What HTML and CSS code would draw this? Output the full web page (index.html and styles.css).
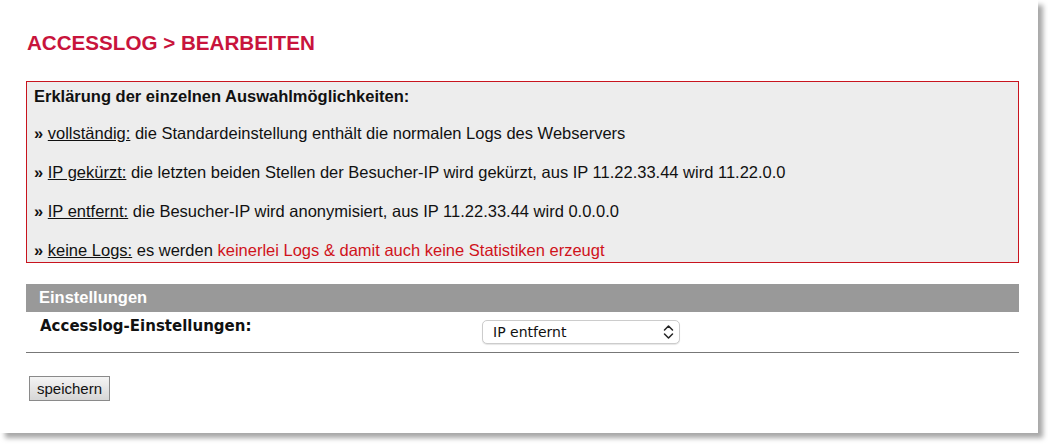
FILE: index.html
```html
<!DOCTYPE html>
<html lang="de">
<head>
<meta charset="utf-8">
<title>Accesslog bearbeiten</title>
<link rel="stylesheet" href="styles.css">
</head>
<body>
<div class="card">
  <h1 class="title">ACCESSLOG &gt; BEARBEITEN</h1>
  <div class="info">
    <p class="info-head">Erklärung der einzelnen Auswahlmöglichkeiten:</p>
    <p><b>»</b> <u>vollständig:</u> die Standardeinstellung enthält die normalen Logs des Webservers</p>
    <p><b>»</b> <u>IP gekürzt:</u> die letzten beiden Stellen der Besucher-IP wird gekürzt, aus IP 11.22.33.44 wird 11.22.0.0</p>
    <p><b>»</b> <u>IP entfernt:</u> die Besucher-IP wird anonymisiert, aus IP 11.22.33.44 wird 0.0.0.0</p>
    <p><b>»</b> <u>keine Logs:</u> es werden <span class="warn">keinerlei Logs &amp; damit auch keine Statistiken erzeugt</span></p>
  </div>
  <div class="section-head">Einstellungen</div>
  <div class="row">
    <div class="label">Accesslog-Einstellungen:</div>
    <div class="select">
      <span>IP entfernt</span>
      <svg width="11" height="16" viewBox="0 0 11 16"><path d="M1.5 6 L5.5 2 L9.5 6 M1.5 10 L5.5 14 L9.5 10" fill="none" stroke="#222" stroke-width="1.5" stroke-linecap="round" stroke-linejoin="round"/></svg>
    </div>
  </div>
  <div class="actions">
    <button class="btn">speichern</button>
  </div>
</div>
</body>
</html>
```
FILE: styles.css
```css
html, body {
  margin: 0;
  padding: 0;
  background: #fff;
}
body {
  height: 444px;
  font-family: "Liberation Sans", Arial, sans-serif;
  color: #111;
}
.card {
  width: 1038px;
  height: 433px;
  box-sizing: border-box;
  background: #fff;
  box-shadow: 5px 5px 5px rgba(0, 0, 0, 0.35);
  padding: 31px 19px 0 26px;
}
.title {
  margin: 0 0 0 1px;
  font-size: 20.6px;
  line-height: 23px;
  font-weight: bold;
  color: #c8143c;
}
.info {
  margin-top: 27px;
  background: #ededed;
  border: 1px solid #c8141e;
  padding: 5px 0 2px 7px;
  height: 182px;
  box-sizing: border-box;
}
.info p {
  margin: 20px 0 0;
  font-size: 16.5px;
  line-height: 19px;
}
.info p.info-head {
  font-weight: bold;
  margin: 0 0 -2px;
}
.warn {
  color: #d0131b;
}
.section-head {
  margin-top: 21px;
  height: 28px;
  background: #999;
  color: #fff;
  font-weight: bold;
  font-size: 16.5px;
  line-height: 27px;
  padding-left: 13px;
}
.row {
  display: flex;
  align-items: flex-start;
  height: 41px;
  border-bottom: 1px solid #777;
  box-sizing: border-box;
}
.label {
  font-family: "DejaVu Sans", Verdana, sans-serif;
  font-weight: bold;
  font-size: 15px;
  line-height: 18px;
  padding: 5px 0 0 14px;
  width: 442px;
  color: #111;
}
.select {
  margin-top: 8px;
  width: 198px;
  height: 24px;
  box-sizing: border-box;
  border: 1px solid #ccc;
  border-radius: 5px;
  background: #fff;
  box-shadow: 0 1px 1px rgba(0,0,0,0.1);
  display: flex;
  align-items: center;
  justify-content: space-between;
  padding: 0 5px 0 10px;
  font-family: "DejaVu Sans", sans-serif;
  font-size: 14px;
  color: #111;
}
.select svg {
  display: block;
}
.actions {
  padding: 23px 0 0 3px;
}
.btn {
  font-family: "Liberation Sans", Arial, sans-serif;
  font-size: 15px;
  color: #111;
  width: 81px;
  height: 25px;
  padding: 0;
  border: 1px solid #8a8a8a;
  border-radius: 0;
  background: linear-gradient(#f4f4f4, #d6d6d6);
}
```
